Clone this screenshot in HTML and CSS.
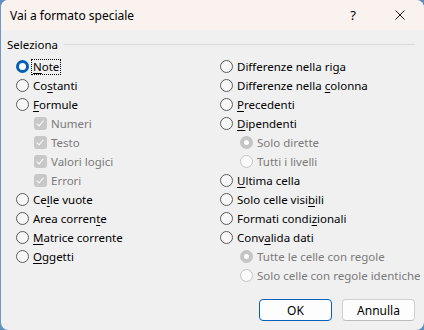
FILE: index.html
```html
<!DOCTYPE html>
<html lang="it">
  <head>
    <meta charset="UTF-8" />
    <title>Vai a formato speciale</title>
    <link rel="stylesheet" href="styles.css">
  </head>
  <body>
    <div class="dialog">
      <div class="titlebar">
        <span class="title">Vai a formato speciale</span>
        <span class="help">?</span>
        <span class="close">
          <svg width="10" height="10" viewBox="0 0 10 10">
            <path d="M0.5 0.5 L9.5 9.5 M9.5 0.5 L0.5 9.5" stroke="#1a1a1a" stroke-width="1" fill="none" />
          </svg>
        </span>
      </div>

      <div class="content">
        <div class="group-head">
          <span>Seleziona</span>
          <div class="rule"></div>
        </div>

        <div class="options">
          <!-- left column -->
          <div class="col">
            <div class="row"><span class="radio checked"></span><span class="label focus"><u>N</u>ote</span></div>
            <div class="row"><span class="radio"></span><span class="label">Co<u>s</u>tanti</span></div>
            <div class="row"><span class="radio"></span><span class="label"><u>F</u>ormule</span></div>
            <div class="row sub left-sub disabled"><span class="check"></span><span class="label">Numeri</span></div>
            <div class="row sub left-sub disabled"><span class="check"></span><span class="label">Testo</span></div>
            <div class="row sub left-sub disabled"><span class="check"></span><span class="label">Valori logici</span></div>
            <div class="row sub left-sub disabled"><span class="check"></span><span class="label">Errori</span></div>
            <div class="row"><span class="radio"></span><span class="label">Ce<u>l</u>le vuote</span></div>
            <div class="row"><span class="radio"></span><span class="label">Area corren<u>t</u>e</span></div>
            <div class="row"><span class="radio"></span><span class="label"><u>M</u>atrice corrente</span></div>
            <div class="row"><span class="radio"></span><span class="label"><u>O</u>ggetti</span></div>
          </div>

          <!-- right column -->
          <div class="col">
            <div class="row"><span class="radio"></span><span class="label">Differenze nella ri<u>g</u>a</span></div>
            <div class="row"><span class="radio"></span><span class="label">Differenze nella <u>c</u>olonna</span></div>
            <div class="row"><span class="radio"></span><span class="label"><u>P</u>recedenti</span></div>
            <div class="row"><span class="radio"></span><span class="label"><u>D</u>ipendenti</span></div>
            <div class="row sub right-sub disabled"><span class="radio checked"></span><span class="label">Solo dirette</span></div>
            <div class="row sub right-sub disabled"><span class="radio"></span><span class="label">Tutti i livelli</span></div>
            <div class="row"><span class="radio"></span><span class="label"><u>U</u>ltima cella</span></div>
            <div class="row"><span class="radio"></span><span class="label">Solo celle visi<u>b</u>ili</span></div>
            <div class="row"><span class="radio"></span><span class="label">Formati condi<u>z</u>ionali</span></div>
            <div class="row"><span class="radio"></span><span class="label">Conv<u>a</u>lida dati</span></div>
            <div class="row sub right-sub disabled"><span class="radio checked"></span><span class="label">Tutte le celle con regole</span></div>
            <div class="row sub right-sub disabled"><span class="radio"></span><span class="label">Solo celle con regole identiche</span></div>
          </div>
        </div>

        <div class="buttons">
          <button class="btn default">OK</button>
          <button class="btn">Annulla</button>
        </div>
      </div>
    </div>
  </body>
</html>
```

FILE: styles.css
```css
:root {
  --color-desktop: #5f8fbd;
  --color-title: #f9f2ee;
  --color-face: #f0f0f0;
  --color-text: #000000;
  --color-disabled: #7a7a7a;
  --color-accent: #005fb8;
  --color-rule: #dadada;
}

* {
  box-sizing: border-box;
}

html,
body {
  margin: 0;
  height: 100%;
}

body {
  background: var(--color-desktop);
  font-family: "Noto Sans", "Open Sans", sans-serif;
  font-size: 11.5px;
  color: var(--color-text);
}

.dialog {
  height: 330px;
  width: 424px;
  border-radius: 8px;
  overflow: hidden;
  background: var(--color-face);
  border-left: 1px solid #6f98c0;
  display: flex;
  flex-direction: column;
}

.titlebar {
  height: 30px;
  flex: none;
  display: flex;
  align-items: center;
  background: var(--color-title);
  padding-left: 9px;
  font-size: 12px;
}

.title {
  flex: 1;
}

.help {
  width: 10px;
  margin-right: 37px;
  font-size: 13px;
  text-align: center;
}

.close {
  display: flex;
  margin-right: 19px;
}

.content {
  flex: 1;
  display: flex;
  flex-direction: column;
  padding: 6px 9px 9px 6px;
}

.group-head {
  display: flex;
  align-items: center;
  height: 16px;
  gap: 6px;
}

.group-head .rule {
  flex: 1;
  height: 1px;
  background: var(--color-rule);
}

.options {
  display: grid;
  grid-template-columns: 204px 1fr;
  margin-top: 5px;
  padding-left: 9px;
}

.row {
  height: 19px;
  display: flex;
  align-items: center;
  gap: 4px;
  white-space: nowrap;
}

.row u {
  text-underline-offset: 2px;
}

.left-sub {
  padding-left: 18px;
}

.right-sub {
  padding-left: 20px;
}

.label {
  line-height: 14px;
  padding: 0 1px;
  border: 1px solid transparent;
  margin-left: -2px;
}

.label.focus {
  border: 1px dotted #000;
}

.disabled .label {
  color: var(--color-disabled);
}

.radio {
  width: 13px;
  height: 13px;
  flex: none;
  border-radius: 50%;
  border: 1px solid #5c5c5c;
  background: #f7f7f7;
}

.radio.checked {
  border: 3.5px solid var(--color-accent);
  background: #ffffff;
}

.disabled .radio {
  border-color: #c4c4c4;
  background: #fafafa;
}

.disabled .radio.checked {
  border: 4px solid #c4c4c4;
  background: #ffffff;
}

.check {
  width: 13px;
  height: 13px;
  flex: none;
  border-radius: 3px;
  background: #c8c8c8;
  position: relative;
}

/* little white tick */
.check::after {
  content: "";
  position: absolute;
  left: 4px;
  top: 2px;
  width: 3px;
  height: 6px;
  border-right: 1px solid #ffffff;
  border-bottom: 1px solid #ffffff;
  transform: rotate(40deg);
}

.buttons {
  margin-top: auto;
  display: flex;
  justify-content: flex-end;
  gap: 10px;
}

.btn {
  width: 73px;
  height: 22px;
  font: inherit;
  font-size: 12px;
  color: var(--color-text);
  background: #fdfdfd;
  border: 1px solid #d0d0d0;
  border-bottom-color: #bcbcbc;
  border-radius: 4px;
  padding: 0;
}

.btn.default {
  border: 1px solid var(--color-accent);
}
```
